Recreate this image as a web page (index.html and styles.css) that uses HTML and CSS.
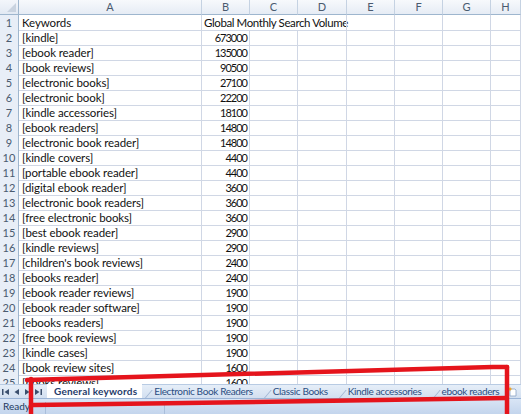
FILE: index.html
```html
<!DOCTYPE html>
<html>
<head>
<meta charset="utf-8">
<link rel="stylesheet" href="styles.css">
</head>
<body>
<div class="app">
  <div class="sheet">
    <div class="row head">
      <div class="corner"><span class="tri"></span></div>
      <div class="ch">A</div><div class="ch">B</div><div class="ch">C</div><div class="ch">D</div>
      <div class="ch">E</div><div class="ch">F</div><div class="ch">G</div><div class="ch">H</div>
    </div>
    <div class="row"><div class="rh">1</div><div class="c">Keywords</div><div class="c spill nb">Global Monthly Search Volume</div><div class="c nb"></div><div class="c"></div><div class="c"></div><div class="c"></div><div class="c"></div><div class="c"></div></div>
    <div class="row"><div class="rh">2</div><div class="c">[kindle]</div><div class="c n">673000</div><div class="c"></div><div class="c"></div><div class="c"></div><div class="c"></div><div class="c"></div><div class="c"></div></div>
    <div class="row"><div class="rh">3</div><div class="c">[ebook reader]</div><div class="c n">135000</div><div class="c"></div><div class="c"></div><div class="c"></div><div class="c"></div><div class="c"></div><div class="c"></div></div>
    <div class="row"><div class="rh">4</div><div class="c">[book reviews]</div><div class="c n">90500</div><div class="c"></div><div class="c"></div><div class="c"></div><div class="c"></div><div class="c"></div><div class="c"></div></div>
    <div class="row"><div class="rh">5</div><div class="c">[electronic books]</div><div class="c n">27100</div><div class="c"></div><div class="c"></div><div class="c"></div><div class="c"></div><div class="c"></div><div class="c"></div></div>
    <div class="row"><div class="rh">6</div><div class="c">[electronic book]</div><div class="c n">22200</div><div class="c"></div><div class="c"></div><div class="c"></div><div class="c"></div><div class="c"></div><div class="c"></div></div>
    <div class="row"><div class="rh">7</div><div class="c">[kindle accessories]</div><div class="c n">18100</div><div class="c"></div><div class="c"></div><div class="c"></div><div class="c"></div><div class="c"></div><div class="c"></div></div>
    <div class="row"><div class="rh">8</div><div class="c">[ebook readers]</div><div class="c n">14800</div><div class="c"></div><div class="c"></div><div class="c"></div><div class="c"></div><div class="c"></div><div class="c"></div></div>
    <div class="row"><div class="rh">9</div><div class="c">[electronic book reader]</div><div class="c n">14800</div><div class="c"></div><div class="c"></div><div class="c"></div><div class="c"></div><div class="c"></div><div class="c"></div></div>
    <div class="row"><div class="rh">10</div><div class="c">[kindle covers]</div><div class="c n">4400</div><div class="c"></div><div class="c"></div><div class="c"></div><div class="c"></div><div class="c"></div><div class="c"></div></div>
    <div class="row"><div class="rh">11</div><div class="c">[portable ebook reader]</div><div class="c n">4400</div><div class="c"></div><div class="c"></div><div class="c"></div><div class="c"></div><div class="c"></div><div class="c"></div></div>
    <div class="row"><div class="rh">12</div><div class="c">[digital ebook reader]</div><div class="c n">3600</div><div class="c"></div><div class="c"></div><div class="c"></div><div class="c"></div><div class="c"></div><div class="c"></div></div>
    <div class="row"><div class="rh">13</div><div class="c">[electronic book readers]</div><div class="c n">3600</div><div class="c"></div><div class="c"></div><div class="c"></div><div class="c"></div><div class="c"></div><div class="c"></div></div>
    <div class="row"><div class="rh">14</div><div class="c">[free electronic books]</div><div class="c n">3600</div><div class="c"></div><div class="c"></div><div class="c"></div><div class="c"></div><div class="c"></div><div class="c"></div></div>
    <div class="row"><div class="rh">15</div><div class="c">[best ebook reader]</div><div class="c n">2900</div><div class="c"></div><div class="c"></div><div class="c"></div><div class="c"></div><div class="c"></div><div class="c"></div></div>
    <div class="row"><div class="rh">16</div><div class="c">[kindle reviews]</div><div class="c n">2900</div><div class="c"></div><div class="c"></div><div class="c"></div><div class="c"></div><div class="c"></div><div class="c"></div></div>
    <div class="row"><div class="rh">17</div><div class="c">[children's book reviews]</div><div class="c n">2400</div><div class="c"></div><div class="c"></div><div class="c"></div><div class="c"></div><div class="c"></div><div class="c"></div></div>
    <div class="row"><div class="rh">18</div><div class="c">[ebooks reader]</div><div class="c n">2400</div><div class="c"></div><div class="c"></div><div class="c"></div><div class="c"></div><div class="c"></div><div class="c"></div></div>
    <div class="row"><div class="rh">19</div><div class="c">[ebook reader reviews]</div><div class="c n">1900</div><div class="c"></div><div class="c"></div><div class="c"></div><div class="c"></div><div class="c"></div><div class="c"></div></div>
    <div class="row"><div class="rh">20</div><div class="c">[ebook reader software]</div><div class="c n">1900</div><div class="c"></div><div class="c"></div><div class="c"></div><div class="c"></div><div class="c"></div><div class="c"></div></div>
    <div class="row"><div class="rh">21</div><div class="c">[ebooks readers]</div><div class="c n">1900</div><div class="c"></div><div class="c"></div><div class="c"></div><div class="c"></div><div class="c"></div><div class="c"></div></div>
    <div class="row"><div class="rh">22</div><div class="c">[free book reviews]</div><div class="c n">1900</div><div class="c"></div><div class="c"></div><div class="c"></div><div class="c"></div><div class="c"></div><div class="c"></div></div>
    <div class="row"><div class="rh">23</div><div class="c">[kindle cases]</div><div class="c n">1900</div><div class="c"></div><div class="c"></div><div class="c"></div><div class="c"></div><div class="c"></div><div class="c"></div></div>
    <div class="row"><div class="rh">24</div><div class="c">[book review sites]</div><div class="c n">1600</div><div class="c"></div><div class="c"></div><div class="c"></div><div class="c"></div><div class="c"></div><div class="c"></div></div>
    <div class="row"><div class="rh">25</div><div class="c">[books reviews]</div><div class="c n">1600</div><div class="c"></div><div class="c"></div><div class="c"></div><div class="c"></div><div class="c"></div><div class="c"></div></div>
  </div>
  <div class="tabbar">
    <div class="nav">
      <svg width="9" height="8" viewBox="0 0 9 8"><rect x="1" y="1" width="1.5" height="6" fill="#3b4f6e"/><path d="M8 1 L3.5 4 L8 7 Z" fill="#3b4f6e"/></svg>
      <svg width="9" height="8" viewBox="0 0 9 8"><path d="M7 1 L2.5 4 L7 7 Z" fill="#3b4f6e"/></svg>
      <svg width="9" height="8" viewBox="0 0 9 8"><path d="M2 1 L6.5 4 L2 7 Z" fill="#3b4f6e"/></svg>
      <svg width="9" height="8" viewBox="0 0 9 8"><path d="M1 1 L5.5 4 L1 7 Z" fill="#3b4f6e"/><rect x="6.5" y="1" width="1.5" height="6" fill="#3b4f6e"/></svg>
    </div>
    <div class="tab active">General keywords</div>
    <div class="tab">Electronic Book Readers</div>
    <div class="tab">Classic Books</div>
    <div class="tab">Kindle accessories</div>
    <div class="tab">ebook readers</div>
    <div class="newsheet">
      <svg width="10" height="11" viewBox="0 0 10 11"><path d="M3 3 H8 L9 4 V10 H3 Z" fill="#fff" stroke="#8aa2c4" stroke-width="0.8"/><path d="M3 0.5 L3.7 2.3 L5.5 3 L3.7 3.7 L3 5.5 L2.3 3.7 L0.5 3 L2.3 2.3 Z" fill="#f0a21c"/></svg>
    </div>
  </div>
  <div class="status">
    <span class="ready">Ready</span>
    <span class="sep s1"></span>
    <span class="sep s2"></span>
  </div>
  <svg class="annot" width="521" height="414" viewBox="0 0 521 414">
    <g fill="none" stroke="#e5141c" stroke-width="4.5" stroke-linecap="round" stroke-linejoin="round">
      <path d="M27 380 C 130 376, 300 371, 493 367 L 507 367"/>
      <path d="M507 367 L 507 416"/>
      <path d="M33 405 C 200 403, 400 400, 506 398"/>
      <path d="M31 379 L 31 416"/>
    </g>
  </svg>
</div>
</body>
</html>
```

FILE: styles.css
```css
* { box-sizing: border-box; }
html, body { margin: 0; padding: 0; background: #fff; }
.app {
  position: relative;
  width: 521px;
  height: 414px;
  overflow: hidden;
  display: flex;
  flex-direction: column;
  font-family: "Lato", "Liberation Sans", sans-serif;
}
.sheet {
  height: 384px;
  overflow: hidden;
  flex: none;
}
.row {
  display: grid;
  grid-template-columns: 19px 183px 48px 48px 49px 48px 48px 48px 30px;
  height: 15px;
}
.head { height: 15px; }
.corner {
  position: relative;
  background: linear-gradient(#f3f6fb, #e2e9f3);
  border-right: 1px solid #9eb6ce;
  border-bottom: 1px solid #9eb6ce;
}
.tri {
  position: absolute;
  right: 2px;
  bottom: 2px;
  width: 0;
  height: 0;
  border-left: 9px solid transparent;
  border-bottom: 9px solid #c9d3e0;
}
.ch {
  background: linear-gradient(#f7f9fc, #e6ecf5);
  border-right: 1px solid #c5d2e2;
  border-bottom: 1px solid #9eb6ce;
  color: #4a5b70;
  font-size: 11px;
  line-height: 14px;
  text-align: center;
}
.rh {
  background: #e8eef7;
  border-right: 1px solid #9eb6ce;
  border-bottom: 1px solid #c5d2e2;
  color: #4a5b70;
  font-size: 11px;
  line-height: 15px;
  text-align: center;
}
.c {
  border-right: 1px solid #d0d7e5;
  border-bottom: 1px solid #d0d7e5;
  color: #111;
  font-size: 11.5px;
  letter-spacing: -0.1px;
  line-height: 15px;
  padding: 0 3px;
  white-space: nowrap;
  overflow: hidden;
}
.c.n {
  text-align: right;
  padding-right: 2px;
  font-size: 11px;
  letter-spacing: -1px;
}
.c.spill { overflow: visible; padding-left: 2px; letter-spacing: -0.4px; }
.c.nb { border-right-color: transparent; }

.tabbar {
  height: 14px;
  flex: none;
  display: flex;
  align-items: stretch;
  background: linear-gradient(#e6eef8, #d2dff0);
  border-top: 1px solid #b8cbe3;
  font-size: 10px;
}
.nav {
  width: 47px;
  flex: none;
  display: flex;
  align-items: center;
  padding-left: 1px;
  gap: 2px;
}
.nav svg { display: block; }
.tab {
  position: relative;
  flex: none;
  padding: 0 8px 0 12px;
  color: #2a4d82;
  letter-spacing: -0.35px;
  line-height: 13px;
  white-space: nowrap;
}
.tab::before {
  content: "";
  position: absolute;
  left: 3px;
  bottom: 0;
  width: 1px;
  height: 8px;
  background: #9fb4d2;
  transform: skewX(-40deg);
  transform-origin: bottom;
}
.tab.active {
  background: #fff;
  color: #1f3b6a;
  font-weight: bold;
  font-size: 10px;
  letter-spacing: 0.2px;
  padding: 0 5px 0 7px;
  margin-top: -1px;
  line-height: 14px;
}
.tab.active::before { display: none; }
.newsheet {
  margin-left: auto;
  width: 14px;
  flex: none;
  display: flex;
  align-items: center;
}
.status {
  position: relative;
  height: 16px;
  flex: none;
  background: linear-gradient(#d9e5f5, #c3d5ed);
  border-top: 1px solid #9ab3d6;
  font-size: 10px;
  line-height: 15px;
  color: #1e3a5f;
  padding-left: 3px;
}
.sep {
  position: absolute;
  top: 3px;
  bottom: 0;
  width: 1px;
  background: #a9bedb;
}
.s1 { left: 45px; }
.s2 { left: 164px; }
.annot {
  position: absolute;
  left: 0;
  top: 0;
  pointer-events: none;
}
```
